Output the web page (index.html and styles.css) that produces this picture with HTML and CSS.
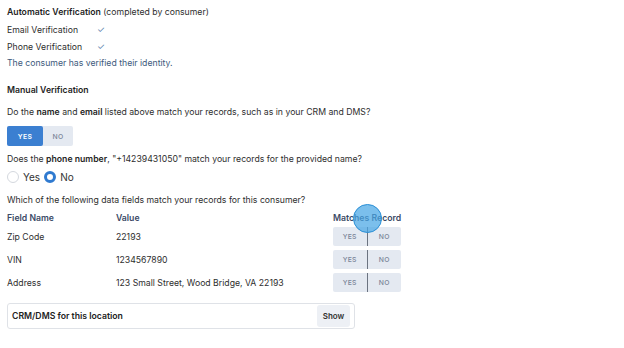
FILE: index.html
```html
<!DOCTYPE html>
<html lang="en">
<head>
    <meta charset="UTF-8">
    <meta name="viewport" content="width=device-width, initial-scale=1.0">
    <title>Verification</title>
    <link rel="stylesheet" href="styles.css">
</head>
<body>
    <div class="verify">
        <p class="line"><b>Automatic Verification</b> (completed by consumer)</p>
        <div class="check-row"><span class="check-label">Email Verification</span><span class="tick">&#10003;</span></div>
        <div class="check-row"><span class="check-label">Phone Verification</span><span class="tick">&#10003;</span></div>
        <p class="line note">The consumer has verified their identity.</p>

        <p class="line heading"><b>Manual Verification</b></p>
        <p class="line">Do the <b>name</b> and <b>email</b> listed above match your records, such as in your CRM and DMS?</p>
        <div class="toggle big">
            <span class="opt on">YES</span>
            <span class="opt">NO</span>
        </div>

        <p class="line">Does the <b>phone number</b>, "+14239431050" match your records for the provided name?</p>
        <div class="radios">
            <span class="radio"></span><span class="radio-label">Yes</span>
            <span class="radio checked"></span><span class="radio-label">No</span>
        </div>

        <p class="line">Which of the following data fields match your records for this consumer?</p>
        <div class="fields">
            <div class="field-row head">
                <span class="col-name">Field Name</span>
                <span class="col-value">Value</span>
                <span class="col-match">Matches Record</span>
            </div>
            <div class="field-row">
                <span class="col-name">Zip Code</span>
                <span class="col-value">22193</span>
                <div class="toggle small"><span class="opt">YES</span><span class="opt">NO</span></div>
            </div>
            <div class="field-row">
                <span class="col-name">VIN</span>
                <span class="col-value">1234567890</span>
                <div class="toggle small"><span class="opt">YES</span><span class="opt">NO</span></div>
            </div>
            <div class="field-row">
                <span class="col-name">Address</span>
                <span class="col-value">123 Small Street, Wood Bridge, VA 22193</span>
                <div class="toggle small"><span class="opt">YES</span><span class="opt">NO</span></div>
            </div>
            <span class="cursor"></span>
        </div>

        <div class="crm-box">
            <span class="crm-title">CRM/DMS for this location</span>
            <button class="show-btn">Show</button>
        </div>
    </div>
</body>
</html>
```
FILE: styles.css
```css
/* General */
body {
    margin: 0;
    background: #fff;
    font-family: Inter, "Noto Sans", Arial, sans-serif;
    font-size: 8.7px;
    color: #2e2e2e;
}

.verify {
    padding: 4px 7px;
}

.line {
    margin: 0;
    line-height: 17px;
}

.line b {
    font-weight: 600;
    color: #1f1f1f;
}

.note {
    color: #3d5a7c;
}

.heading {
    margin-top: 10px;
    margin-bottom: 5px;
}

/* Auto check rows */
.check-row {
    display: flex;
    align-items: center;
    height: 17px;
}

.check-label {
    width: 90px;
}

.tick {
    color: #5d7fae;
    font-size: 9px;
}

/* Toggles */
.toggle {
    display: flex;
    background: #e4e9f1;
    border-radius: 2px;
}

.toggle.big {
    width: 66px;
    height: 20px;
    margin: 5px 0 5px;
}

.toggle .opt {
    display: flex;
    align-items: center;
    justify-content: center;
    font-size: 6.8px;
    font-weight: 500;
    letter-spacing: 0.3px;
    color: #7a8598;
}

.toggle.big .opt {
    width: 30px;
}

.toggle.big .opt.on {
    width: 36px;
    background: #3b7fd1;
    color: #fff;
    border-radius: 2px;
    font-weight: 600;
}

.toggle.small {
    width: 68px;
    height: 19px;
    margin-left: auto;
}

.toggle.small .opt {
    flex: 1;
}

.toggle.small .opt + .opt {
    border-left: 1px solid #6b7380;
}

/* Radios */
.radios {
    display: flex;
    align-items: center;
    height: 18px;
    margin-bottom: 6px;
}

.radio {
    width: 10px;
    height: 10px;
    border: 1px solid #d4d8de;
    border-radius: 50%;
    margin-right: 4px;
}

.radio.checked {
    width: 6px;
    height: 6px;
    border: 3px solid #2f7ad0;
    margin-left: 4px;
}

.radio-label {
    font-size: 10px;
    color: #333;
}

/* Data field table */
.fields {
    position: relative;
    width: 394px;
    margin-top: 1px;
}

.field-row {
    display: flex;
    align-items: center;
    height: 23px;
}

.field-row.head {
    height: 15px;
    font-weight: 600;
    color: #3b4a66;
}

.col-name {
    width: 109px;
}

.col-value {
    flex: 1;
}

.col-match {
    width: 68px;
    white-space: nowrap;
}

.cursor {
    position: absolute;
    left: 346px;
    top: -6px;
    width: 27px;
    height: 27px;
    border-radius: 50%;
    background: rgba(72, 166, 228, 0.72);
    border: 1.5px solid #2a8fd6;
}

/* CRM box */
.crm-box {
    display: flex;
    align-items: center;
    justify-content: space-between;
    width: 338px;
    height: 24px;
    margin-top: 9px;
    padding: 0 4px;
    border: 1px solid #dfe2e7;
    border-radius: 3px;
}

.crm-title {
    font-weight: 600;
    color: #222;
}

.show-btn {
    border: none;
    background: #edf0f5;
    border-radius: 3px;
    font-family: inherit;
    font-size: 8px;
    font-weight: 600;
    color: #333;
    width: 33px;
    height: 22px;
    padding: 0;
}
```
